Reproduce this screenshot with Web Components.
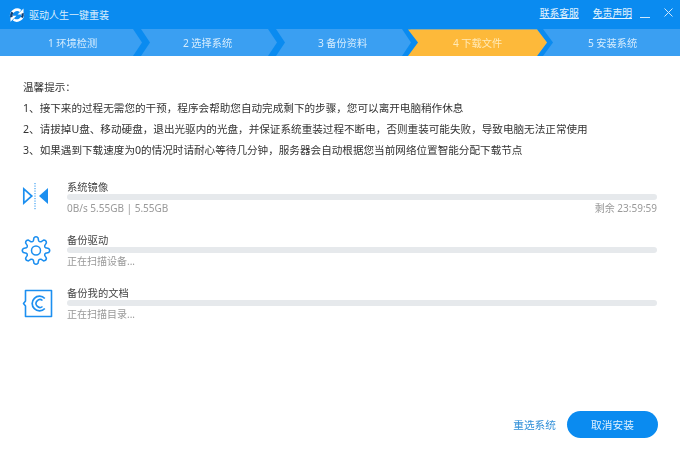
<!DOCTYPE html>
<html lang="zh">
<head>
<meta charset="utf-8">
<title>驱动人生一键重装</title>
<style>
  html, body { margin: 0; height: 100%; }
  body { font-family: "Noto Sans", "Noto Sans CJK SC", sans-serif; background: #fff; }
</style>
</head>
<body>
<reinstall-app>
  <title-bar title="驱动人生一键重装"></title-bar>
  <step-bar active="4" steps="环境检测,选择系统,备份资料,下载文件,安装系统"></step-bar>
  <tip-list>
    <p>温馨提示：</p>
    <p>1、接下来的过程无需您的干预，程序会帮助您自动完成剩下的步骤，您可以离开电脑稍作休息</p>
    <p>2、请拔掉U盘、移动硬盘，退出光驱内的光盘，并保证系统重装过程不断电，否则重装可能失败，导致电脑无法正常使用</p>
    <p>3、如果遇到下载速度为0的情况时请耐心等待几分钟，服务器会自动根据您当前网络位置智能分配下载节点</p>
  </tip-list>
  <task-list>
    <task-row icon="mirror" name="系统镜像" status="0B/s 5.55GB | 5.55GB" remain="剩余 23:59:59"></task-row>
    <task-row icon="gear" name="备份驱动" status="正在扫描设备..."></task-row>
    <task-row icon="doc" name="备份我的文档" status="正在扫描目录..."></task-row>
  </task-list>
  <action-bar></action-bar>
</reinstall-app>

<script>
// main window column, the action bar gets pushed to the bottom
class ReinstallApp extends HTMLElement {
  constructor() {
    super();
    this.attachShadow({ mode: 'open' }).innerHTML = `
      <style>
        :host { display: flex; flex-direction: column; width: 680px; height: 453px; overflow: hidden; filter: blur(0.3px); }
        ::slotted(action-bar) { margin-top: auto; }
      </style>
      <slot></slot>`;
  }
}

class TitleBar extends HTMLElement {
  connectedCallback() {
    this.attachShadow({ mode: 'open' }).innerHTML = `
      <style>
        :host { display: flex; align-items: center; height: 29px; background: #0a8bf0; color: #fff; font-size: 10px; flex: none; }
        .logo { margin-left: 9px; margin-right: 4px; display: block; }
        .title { color: #d9eefd; }
        .links { margin-left: auto; display: flex; align-items: center; margin-top: -4px; }
        a { color: #e6f4fe; text-decoration: underline; margin-right: 14px; font-size: 9.800px; }
        .win { display: block; }
      </style>
      <svg class="logo" width="16" height="16" viewBox="0 0 16 16" fill="none">
        <path d="M2.300 10A6 6 0 0 1 11.500 3.800" stroke="#fff" stroke-width="2.600"/>
        <path d="M14.500 1.500v6h-6z" fill="#fff"/>
        <path d="M13.700 6.500A6 6 0 0 1 4.500 12.500" stroke="#fff" stroke-width="2.600"/>
        <path d="M1.500 14.800v-6h6z" fill="#fff"/>
        <path d="M2.300 10.200A6 6 0 0 1 3.500 5.200" stroke="#0c3f78" stroke-width="2.600"/>
        <path d="M13.700 6.200A6 6 0 0 1 12.800 10.500" stroke="#0c3f78" stroke-width="2.200"/>
      </svg>
      <span class="title">${this.getAttribute('title')}</span>
      <div class="links">
        <a>联系客服</a>
        <a style="margin-right:8px">免责声明</a>
        <svg class="win" width="10" height="10" viewBox="0 0 10 10" style="margin-right:14px;margin-top:2px"><path d="M0 8.500h10" stroke="#cfe8fc" stroke-width="1"/></svg>
        <svg class="win" width="9" height="9" viewBox="0 0 9 9" style="margin-right:7px;margin-top:-1px"><path d="M.5 .5l8 8M8.500 .5l-8 8" stroke="#cfe8fc" stroke-width="1"/></svg>
      </div>`;
  }
}

class StepBar extends HTMLElement {
  connectedCallback() {
    const active = Number(this.getAttribute('active'));
    const items = this.getAttribute('steps').split(',').map((s, i) => {
      const n = i + 1;
      return `<div class="${n === active ? 'step on' : 'step'}">${n} ${s}</div>`;
    }).join('');
    this.attachShadow({ mode: 'open' }).innerHTML = `
      <style>
        :host { display: flex; height: 27px; padding-left: 5px; background: #3a9ff2; color: #d5ecfd; font-size: 10.200px; flex: none; position: relative; overflow: hidden; }
        .step { position: relative; width: 135px; flex: none; display: flex; align-items: center; justify-content: center; }
        .step.on { color: #ffeab8; }
        svg { position: absolute; left: 0; top: 0; }
      </style>
      <svg width="680" height="27" viewBox="0 0 680 27">
        <path d="M133 0h8l9 13.500L141 27h-8l9-13.500z" fill="#0a8bf0"/>
        <path d="M268 0h8l9 13.500L276 27h-8l9-13.500z" fill="#0a8bf0"/>
        <path d="M402 0h8l9 13.500L410 27h-8l9-13.500z" fill="#0a8bf0"/>
        <path d="M537 0h6l10 13.500L543 27h-6l10-13.500z" fill="#0a8bf0"/>
        <path d="M408 .5h129l10 13L537 27H408l10-13.500z" fill="#fdb93a"/>
      </svg>
      ${items}`;
  }
}

class TipList extends HTMLElement {
  constructor() {
    super();
    this.attachShadow({ mode: 'open' }).innerHTML = `
      <style>
        :host { display: block; padding: 24px 0 0 23px; font-size: 10.600px; color: #333; flex: none; }
        ::slotted(p) { margin: 0 0 7px; line-height: 14px; white-space: nowrap; }
      </style>
      <slot></slot>`;
  }
}

class TaskList extends HTMLElement {
  constructor() {
    super();
    this.attachShadow({ mode: 'open' }).innerHTML = `
      <style>:host { display: block; padding: 16px 23px 0 21px; flex: none; }</style>
      <slot></slot>`;
  }
}

// eight rounded lobes, same outline on each turn
function gearPath(cx, cy, rOut, rIn, teeth) {
  const step = Math.PI * 2 / teeth;
  const pt = (r, a) => `${(cx + r * Math.cos(a)).toFixed(2)} ${(cy + r * Math.sin(a)).toFixed(2)}`;
  let d = '';
  for (let i = 0; i < teeth; i++) {
    const a = i * step - Math.PI / 2;
    d += (i ? 'L' : 'M') + pt(rIn, a - step * 0.34);
    d += 'L' + pt(rOut - 0.6, a - step * 0.2);
    d += 'Q' + pt(rOut + 1.2, a) + ' ' + pt(rOut - 0.6, a + step * 0.2);
    d += 'L' + pt(rIn, a + step * 0.34);
    d += 'Q' + pt(rIn - 0.9, a + step * 0.5) + ' ' + pt(rIn, a + step * 0.66);
  }
  return d + 'Z';
}

const TASK_ICONS = {
  mirror: `<svg width="30" height="30" viewBox="0 0 30 30">
      <path d="M2.800 7.800v14.400l8-7.200z" fill="none" stroke="#1c8ff0" stroke-width="1.700"/>
      <path d="M27 7v16l-9-8z" fill="#1c8ff0"/>
      <path d="M14 2v27" stroke="#1c8ff0" stroke-width="1" stroke-dasharray="1.200 1.300"/></svg>`,
  gear: `<svg width="30" height="30" viewBox="0 0 30 30" fill="none" stroke="#1c8ff0" stroke-width="1.500" style="overflow:visible">
      <path d="${gearPath(15, 16.500, 13.500, 10, 8)}" stroke-linejoin="round"/>
      <circle cx="15" cy="16.500" r="4.500"/></svg>`,
  doc: `<svg width="30" height="30" viewBox="0 0 30 30" fill="none" stroke="#1c8ff0" style="overflow:visible">
      <path d="M4.500 3.500h26v26h-26v-10.500L2.500 16.500l2-2.500z" stroke-width="1.600" stroke-linejoin="round"/>
      <path d="M23.800 11.500a7.300 7.300 0 1 0 0 10" stroke-width="1.700"/>
      <path d="M21.500 13.500a3.900 3.900 0 1 0 0 6" stroke-width="1.600"/></svg>`
};

class TaskRow extends HTMLElement {
  connectedCallback() {
    const remain = this.getAttribute('remain');
    this.attachShadow({ mode: 'open' }).innerHTML = `
      <style>
        :host { display: flex; height: 53px; align-items: flex-start; }
        .icon { width: 30px; height: 30px; margin-top: 1px; flex: none; }
        .icon svg { display: block; }
        .body { margin-left: 16px; flex: 1; min-width: 0; }
        .name { font-size: 10.300px; line-height: 14px; color: #444; }
        .track { height: 6px; border-radius: 3px; background: #e6e9ec; }
        .foot { display: flex; justify-content: space-between; font-size: 10px; line-height: 14px; color: #999; margin-top: 1px; }
      </style>
      <div class="icon">${TASK_ICONS[this.getAttribute('icon')]}</div>
      <div class="body">
        <div class="name">${this.getAttribute('name')}</div>
        <div class="track"></div>
        <div class="foot"><span>${this.getAttribute('status')}</span><span>${remain || ''}</span></div>
      </div>`;
  }
}

class ActionBar extends HTMLElement {
  connectedCallback() {
    this.attachShadow({ mode: 'open' }).innerHTML = `
      <style>
        :host { display: flex; justify-content: flex-end; align-items: center; padding: 0 22px 15px 0; flex: none; }
        a { color: #2f8fd8; font-size: 10.700px; margin-right: 11px; }
        button { width: 91px; height: 27px; border: 0; border-radius: 14px; background: #0a8bf0; color: #e2f2fe; font: inherit; font-size: 10.700px; padding: 0; }
      </style>
      <a>重选系统</a>
      <button>取消安装</button>`;
  }
}

customElements.define('reinstall-app', ReinstallApp);
customElements.define('title-bar', TitleBar);
customElements.define('step-bar', StepBar);
customElements.define('tip-list', TipList);
customElements.define('task-list', TaskList);
customElements.define('task-row', TaskRow);
customElements.define('action-bar', ActionBar);
</script>
</body>
</html>
